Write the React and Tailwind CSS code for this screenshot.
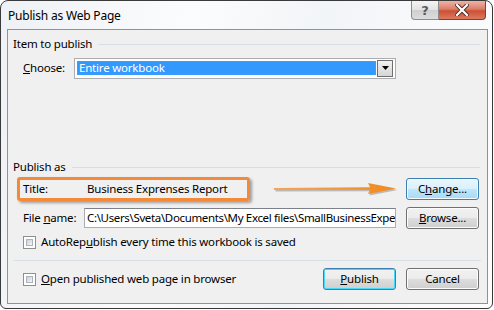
import React from "react";

const font = { fontFamily: '"Noto Sans", "Segoe UI", sans-serif' };

function Btn({ children, variant = "normal", className = "" }) {
  const base =
    "flex items-center justify-center w-[73px] h-[22px] rounded-[3px] text-[11.5px] tracking-[-0.2px] text-black leading-none";
  const styles = {
    normal:
      "border border-[#707070] bg-[linear-gradient(#f2f2f2_0%,#ebebeb_50%,#dddddd_51%,#cfcfcf_100%)] shadow-[inset_0_0_0_1px_#fcfcfc]",
    hover:
      "border border-[#3c7fb1] bg-[linear-gradient(#eaf6fd_0%,#d9f0fc_50%,#bee6fd_51%,#a7d9f5_100%)] shadow-[inset_0_0_0_1px_#f4fbfe]",
    def:
      "border border-[#3c7fb1] bg-[linear-gradient(#f2f2f2_0%,#ebebeb_50%,#dddddd_51%,#cfcfcf_100%)] shadow-[inset_0_0_0_1px_#48d8fb]",
  };
  return <div className={`${base} ${styles[variant]} ${className}`}>{children}</div>;
}

function Check() {
  return (
    <div className="w-[13px] h-[13px] border border-[#8e8f8f] bg-white p-[2px] shrink-0">
      <div className="w-full h-full bg-[linear-gradient(135deg,#cbcfd5,#f6f6f6)] border border-[#aeb3b9]" />
    </div>
  );
}

function GroupHeader({ label }) {
  return (
    <div className="flex items-center h-[16px] pl-[5px] pr-[7px]">
      <span className="text-[11.5px] tracking-[-0.2px] leading-[16px] text-black whitespace-nowrap">{label}</span>
      <div className="flex-1 h-px bg-[#d5dfe5] ml-[6px]" />
    </div>
  );
}

const txt = "text-[11.5px] tracking-[-0.2px] text-black whitespace-nowrap";

export default function App() {
  return (
    <div className="w-[494px] h-[310px] bg-white" style={font}>
      <div className="w-[493px] h-[309px] border border-[#3a3a3a] rounded-t-[8px] rounded-b-[6px] bg-[linear-gradient(100deg,#eef1f5_0%,#fbfcfd_35%,#f2f5f8_60%,#fdfdfe_100%)] flex flex-col overflow-hidden">
        {/* title bar */}
        <div className="h-[28px] flex items-start shrink-0">
          <div className="pl-[7px] pt-[6px] text-[12px] tracking-[-0.2px] leading-[18px] text-black">Publish as Web Page</div>
          <div className="ml-auto mr-[6px] flex">
            <div className="w-[28px] h-[19px] border border-[#8c8c8c] border-t-0 rounded-bl-[4px] bg-[linear-gradient(#f4f4f4_0%,#e2e2e2_50%,#cfcfcf_51%,#dcdcdc_100%)] flex items-center justify-center">
              <span className="text-[13px] leading-none text-[#5a5a5a] font-bold" style={{ fontFamily: '"DejaVu Sans", sans-serif' }}>?</span>
            </div>
            <div className="w-[47px] h-[19px] border border-[#8a3c32] border-t-0 border-l-0 rounded-br-[4px] bg-[linear-gradient(#eeb3a6_0%,#dc7d69_45%,#cc4f36_55%,#db7a60_100%)] flex items-center justify-center">
              <svg width="14" height="12" viewBox="0 0 14 12">
                <path d="M2 1 L12 11 M12 1 L2 11" stroke="#4a2a24" strokeWidth="4" strokeLinecap="square" />
                <path d="M2 1 L12 11 M12 1 L2 11" stroke="#ffffff" strokeWidth="2.2" strokeLinecap="square" />
              </svg>
            </div>
          </div>
        </div>

        {/* client area */}
        <div className="ml-[6px] w-[481px] h-[275px] border border-[#8e939b] bg-[#f0f0f0] flex flex-col pt-[6px]">
          <GroupHeader label="Item to publish" />
          <div className="flex items-center mt-[5px] h-[22px]">
            <span className={`ml-[15px] w-[51px] ${txt}`}><u>C</u>hoose:</span>
            <div className="w-[322px] h-[21px] border border-[#abadb3] bg-white flex items-center p-[2px]">
              <div className="flex-1 h-[14px] bg-[#3399ff] border border-dotted border-[#e07b24] text-white text-[11.5px] tracking-[-0.2px] leading-[12px] pl-[1px] flex items-center">
                Entire workbook
              </div>
              <div className="ml-[1px] w-[16px] h-[17px] border border-[#707070] bg-[linear-gradient(#f2f2f2,#d6d6d6)] flex items-center justify-center">
                <svg width="7" height="4" viewBox="0 0 7 4"><path d="M0 0 H7 L3.5 4 Z" fill="#000" /></svg>
              </div>
            </div>
          </div>

          <div className="mt-[80px]">
            <GroupHeader label="Publish as" />
          </div>

          {/* title row */}
          <div className="flex items-center mt-[2px] h-[24px]">
            <div className="ml-[9px] w-[233px] h-[24px] border-[3px] border-[#f28a3a] rounded-[3px] shadow-[2px_2px_3px_rgba(0,0,0,0.35)] flex items-center">
              <span className={`ml-[3px] w-[64px] ${txt}`}>Title:</span>
              <span className={txt}>Business Exprenses Report</span>
            </div>
            <svg width="130" height="18" viewBox="0 0 130 18" className="ml-[22px]" style={{ overflow: "visible" }}>
              <defs>
                <linearGradient id="ag" x1="0" x2="1" y1="0" y2="0">
                  <stop offset="0" stopColor="#f5a45a" />
                  <stop offset="1" stopColor="#f08a1e" />
                </linearGradient>
              </defs>
              <g transform="translate(1.5 1.5)" opacity="0.35">
                <path d="M2 8 L98 7.2 L96 3 L124 8.5 L96 14 L98 9.8 L2 10 Z" fill="#555" />
              </g>
              <path d="M2 8 L98 7.2 L96 3 L124 8.5 L96 14 L98 9.8 L2 10 Z" fill="url(#ag)" />
            </svg>
            <Btn variant="hover" className="ml-auto mr-[8px]">
              <span>C<u>h</u>ange...</span>
            </Btn>
          </div>

          {/* file name row */}
          <div className="flex items-center mt-[6px] h-[22px]">
            <span className={`ml-[15px] w-[61px] ${txt}`}>File <u>n</u>ame:</span>
            <div className="w-[312px] h-[20px] border border-[#abadb3] border-t-[#7b8089] bg-white leading-[18px] pl-[2px] overflow-hidden text-[11.5px] tracking-[-0.35px] text-black whitespace-nowrap">
              C:\Users\Sveta\Documents\My Excel files\SmallBusinessExpe
            </div>
            <Btn className="ml-auto mr-[8px]">
              <span><u>B</u>rowse...</span>
            </Btn>
          </div>

          {/* autorepublish */}
          <div className="flex items-center mt-[5px] h-[16px] pl-[15px] gap-[5px]">
            <Check />
            <span className={txt}>AutoRep<u>u</u>blish every time this workbook is saved</span>
          </div>

          <div className="mt-[10px] mx-[6px] h-px bg-[#d5dfe5]" />

          {/* bottom row */}
          <div className="flex items-center mt-[7px] h-[22px]">
            <div className="flex items-center pl-[15px] gap-[5px]">
              <Check />
              <span className={txt}><u>O</u>pen published web page in browser</span>
            </div>
            <Btn variant="def" className="ml-auto">
              <span><u>P</u>ublish</span>
            </Btn>
            <Btn className="ml-[10px] mr-[8px]">
              <span>Cancel</span>
            </Btn>
          </div>
        </div>
      </div>
    </div>
  );
}
